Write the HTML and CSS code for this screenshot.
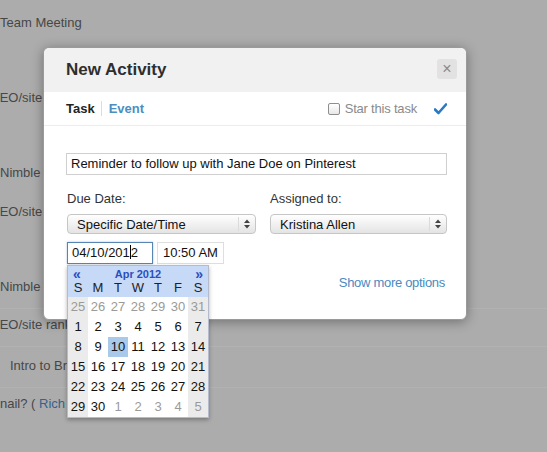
FILE: index.html
```html
<!DOCTYPE html>
<html lang="en">
<head>
  <meta charset="UTF-8" />
  <title>New Activity</title>
  <link rel="stylesheet" href="styles.css">
</head>
<body>
  <!-- Lista de fundo (atras do modal) -->
  <ul class="bg-list">
    <li class="row-1">Team Meeting</li>
    <li class="row-2 cut">SEO/site ranking review</li>
    <li class="row-2">Nimble demo follow up</li>
    <li class="row-3 cut">SEO/site ranking update</li>
    <li class="row-4 line">Nimble weekly sync</li>
    <li class="row-5 line cut">SEO/site ranking report</li>
    <li class="row-6 line indent">Intro to Brenda</li>
    <li class="row-5">nail? ( <a href="#">Rich Miller</a> )</li>
  </ul>

  <!-- Modal -->
  <div class="modal">
    <div class="modal-head">
      <h2>New Activity</h2>
      <button class="close">&times;</button>
    </div>

    <div class="modal-tabs">
      <a class="tab active" href="#">Task</a>
      <span class="tab-sep"></span>
      <a class="tab" href="#">Event</a>
      <label class="star">
        <span class="star-box"></span>
        Star this task
      </label>
      <svg class="done" width="13" height="12" viewBox="0 0 13 12">
        <path d="M1 6.5 L4.5 10 L12 1.5" fill="none" stroke="#2b78c5" stroke-width="2.6" stroke-linecap="round" stroke-linejoin="round"/>
      </svg>
    </div>

    <div class="modal-body">
      <div class="text-input subject">Reminder to follow up with Jane Doe on Pinterest</div>

      <div class="fields">
        <div class="field">
          <label>Due Date:</label>
          <div class="select">
            <span>Specific Date/Time</span>
            <span class="select-arrows">
              <svg width="6" height="10" viewBox="0 0 6 10"><path d="M0 4 L3 0.5 L6 4 Z M0 6 L3 9.5 L6 6 Z" fill="#444"/></svg>
            </span>
          </div>
        </div>
        <div class="field">
          <label>Assigned to:</label>
          <div class="select">
            <span>Kristina Allen</span>
            <span class="select-arrows">
              <svg width="6" height="10" viewBox="0 0 6 10"><path d="M0 4 L3 0.5 L6 4 Z M0 6 L3 9.5 L6 6 Z" fill="#444"/></svg>
            </span>
          </div>
        </div>
      </div>

      <div class="date-row">
        <div class="date-wrap">
          <div class="text-input date focus">04/10/201<span class="caret"></span>2</div>

          <!-- Calendario -->
          <div class="calendar">
            <div class="cal-head">
              <div class="cal-title">
                <span class="cal-nav">&laquo;</span>
                <span>Apr 2012</span>
                <span class="cal-nav">&raquo;</span>
              </div>
              <div class="cal-grid cal-days">
                <span>S</span><span>M</span><span>T</span><span>W</span><span>T</span><span>F</span><span>S</span>
              </div>
            </div>
            <div class="cal-grid cal-dates">
              <span class="we other">25</span><span class="other">26</span><span class="other">27</span><span class="other">28</span><span class="other">29</span><span class="other">30</span><span class="we other">31</span>
              <span class="we">1</span><span>2</span><span>3</span><span>4</span><span>5</span><span>6</span><span class="we">7</span>
              <span class="we">8</span><span>9</span><span class="sel">10</span><span>11</span><span>12</span><span>13</span><span class="we">14</span>
              <span class="we">15</span><span>16</span><span>17</span><span>18</span><span>19</span><span>20</span><span class="we">21</span>
              <span class="we">22</span><span>23</span><span>24</span><span>25</span><span>26</span><span>27</span><span class="we">28</span>
              <span class="we">29</span><span>30</span><span class="other">1</span><span class="other">2</span><span class="other">3</span><span class="other">4</span><span class="we other">5</span>
            </div>
          </div>
        </div>
        <div class="text-input time">10:50 AM</div>
      </div>

      <div class="more-row">
        <a class="more" href="#">Show more options</a>
      </div>
    </div>
  </div>
</body>
</html>
```

FILE: styles.css
```css
* {
  box-sizing: border-box;
}

html, body {
  margin: 0;
  height: 100%;
  overflow: hidden;
}

body {
  background: #acacac;
  font-family: "Liberation Sans", Arial, Helvetica, sans-serif;
  font-size: 13px;
  color: #474747;
  position: relative;
}

/* Lista de fundo */
.bg-list {
  list-style: none;
  margin: 0;
  padding: 0;
}

.bg-list li {
  line-height: 16px;
  height: 16px;
  box-sizing: content-box;
}

.bg-list a {
  color: #33628f;
  text-decoration: none;
}

.row-1 { margin-top: 15px; }
.row-2 { margin-top: 59px; }
.row-3 { margin-top: 23px; }
.row-4 { margin-top: 59px; }
.row-5 { padding-top: 8px; }
.row-6 { padding-top: 11px; }

.bg-list li.line {
  padding-bottom: 13px;
  border-bottom: 1px solid #b2b2b2;
}

.cut { margin-left: -9px; }
.indent { padding-left: 10px; }

/* Modal */
.modal {
  position: absolute;
  left: 43px;
  top: 47px;
  width: 424px;
  height: 273px;
  background: #fff;
  border: 1px solid #9a9a9a;
  border-radius: 6px;
  box-shadow: 0 2px 12px rgba(0, 0, 0, 0.35);
}

.modal-head {
  height: 44px;
  background: #f1f1f1;
  border-radius: 6px 6px 0 0;
  display: flex;
  align-items: center;
  justify-content: space-between;
  padding: 0 9px 0 22px;
}

.modal-head h2 {
  margin: 0;
  font-size: 17px;
  color: #2e2e2e;
  font-weight: bold;
}

.close {
  width: 20px;
  height: 20px;
  padding: 0;
  border: none;
  border-radius: 3px;
  background: #e2e2e2;
  color: #8a8a8a;
  font-family: "Liberation Sans", Arial, sans-serif;
  font-size: 16px;
  line-height: 20px;
  margin-top: -2px;
}

.modal-tabs {
  height: 34px;
  display: flex;
  align-items: center;
  padding: 0 19px 0 22px;
  border-bottom: 1px solid #ededed;
}

.tab {
  font-weight: bold;
  color: #4a8fc0;
  text-decoration: none;
}

.tab.active {
  color: #232323;
}

.tab-sep {
  width: 1px;
  height: 15px;
  background: #dcdcdc;
  margin: 0 7px 0 6px;
}

.star {
  margin-left: auto;
  display: flex;
  align-items: center;
  gap: 5px;
  color: #8a8a8a;
  letter-spacing: -0.2px;
}

.star-box {
  width: 12px;
  height: 12px;
  border: 1px solid #8e8e8e;
  border-radius: 2px;
  background: linear-gradient(#fff, #e8e8e8);
}

.done {
  margin-left: 17px;
}

.modal-body {
  padding: 27px 19px 0 22px;
}

.text-input {
  height: 22px;
  border: 1px solid #cfcfcf;
  line-height: 20px;
  padding: 0 4px;
  color: #111;
  background: #fff;
}

.fields {
  display: grid;
  grid-template-columns: 189px 177px;
  column-gap: 14px;
  margin-top: 16px;
  padding-left: 1px;
}

.field label {
  display: block;
  color: #333;
  line-height: 16px;
  margin-bottom: 7px;
}

.select {
  height: 20px;
  border: 1px solid #c6c6c6;
  border-radius: 4px;
  background: linear-gradient(#ffffff, #e4e4e4);
  display: flex;
  align-items: center;
  justify-content: space-between;
  padding: 0 0 0 9px;
  color: #111;
}

.select-arrows {
  display: flex;
  align-items: center;
  justify-content: center;
  width: 17px;
  height: 14px;
  border-left: 1px solid #dadada;
}

.date-row {
  display: flex;
  gap: 4px;
  margin-top: 8px;
  padding-left: 1px;
}

.date-wrap {
  position: relative;
}

.date {
  width: 86px;
  padding-left: 4px;
  border-color: #5685b3;
  box-shadow: 0 0 2px rgba(86, 133, 179, 0.5);
}

.caret {
  display: inline-block;
  width: 1px;
  height: 14px;
  background: #000;
  vertical-align: -2px;
}

.time {
  width: 67px;
  padding-left: 5px;
  border-color: #dedede;
}

.more-row {
  display: flex;
  justify-content: flex-end;
  margin-top: 11px;
  padding-right: 2px;
}

.more {
  color: #4a8abf;
  text-decoration: none;
  letter-spacing: -0.3px;
}

/* Calendario */
.calendar {
  position: absolute;
  left: 0;
  top: 23px;
  width: 142px;
  background: #fff;
  border: 1px solid #b4bccb;
  box-shadow: 0 2px 4px rgba(0, 0, 0, 0.3);
  z-index: 2;
}

.cal-head {
  background: #c6d9f6;
}

.cal-title {
  display: flex;
  justify-content: space-between;
  align-items: center;
  height: 15px;
  padding: 0 5px 0 5px;
  color: #2a4fc0;
  font-size: 11px;
  font-weight: bold;
}

.cal-nav {
  font-size: 14px;
}

.cal-grid {
  display: grid;
  grid-template-columns: repeat(7, 20px);
}

.cal-grid span {
  text-align: center;
}

.cal-days span {
  height: 16px;
  line-height: 14px;
  color: #222;
}

.cal-dates span {
  height: 20px;
  line-height: 20px;
  color: #111;
}

.cal-dates .we {
  background: #ebebeb;
}

.cal-dates .other {
  color: #9a9a9a;
}

.cal-dates .sel {
  background: #a9c9ea;
}
```
